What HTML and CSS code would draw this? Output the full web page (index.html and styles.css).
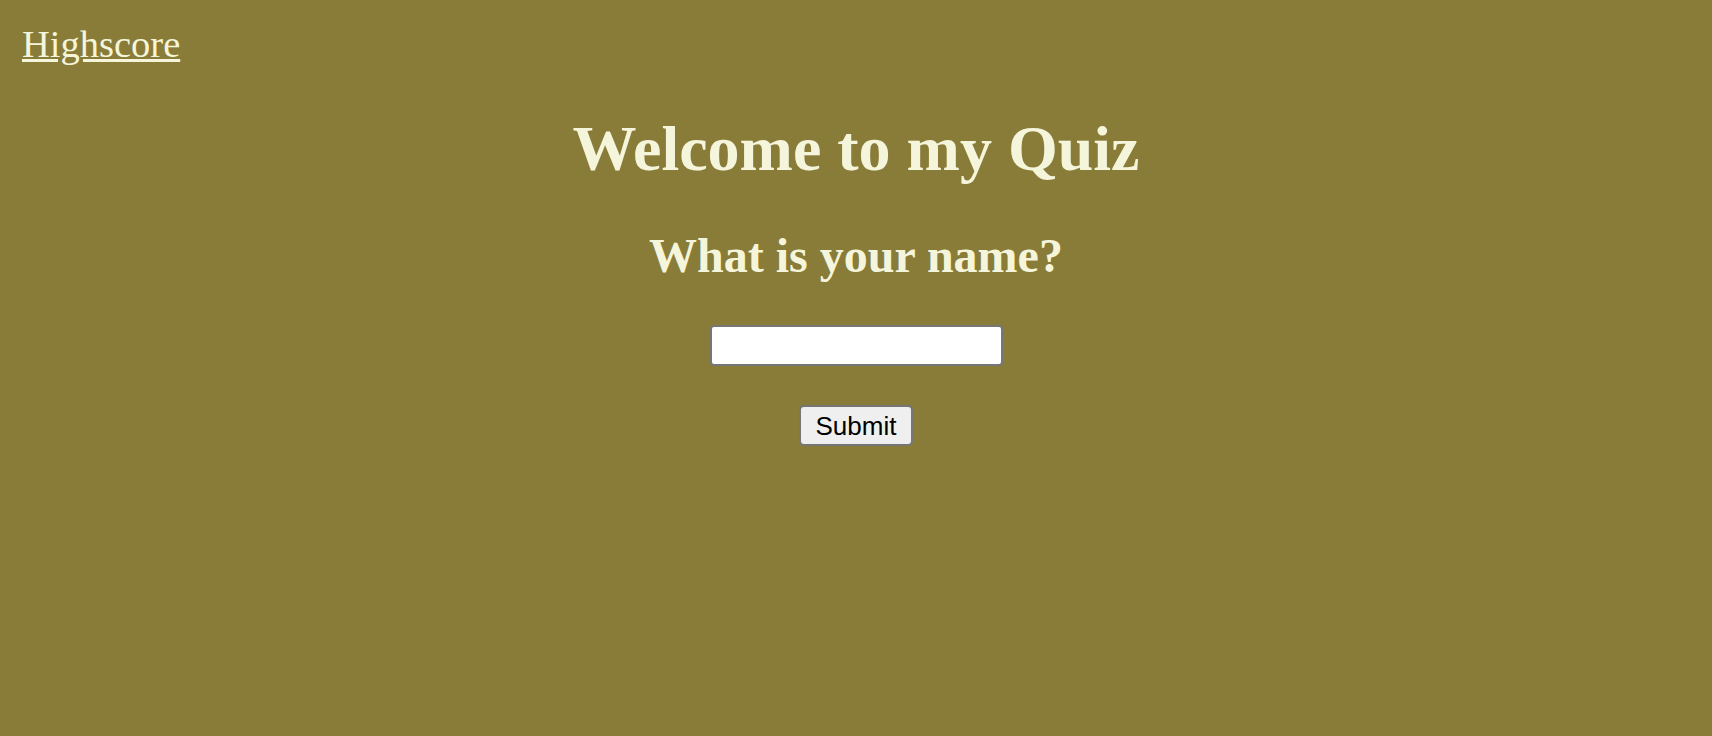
FILE: index.html
```html
<!DOCTYPE html>
<html lang="en">
<head>
<meta charset="utf-8">
<title>Quiz</title>
<link rel="stylesheet" href="styles.css">
</head>
<body>
<nav class="topbar">
  <a class="highscore-link" href="#">Highscore</a>
</nav>
<main class="start">
  <h1 class="title">Welcome to my Quiz</h1>
  <h2 class="question">What is your name?</h2>
  <input class="name-input" type="text" aria-label="Name">
  <button class="submit-btn" type="button">Submit</button>
</main>
</body>
</html>
```

FILE: styles.css
```css
html, body {
  margin: 0;
  padding: 0;
}

body {
  background: #897c38;
  color: #f5f5dc;
  font-family: "Liberation Serif", "Times New Roman", serif;
  min-height: 736px;
}

.topbar {
  padding: 22px 0 0 22px;
  height: 45px;
}

.highscore-link {
  color: #f5f5dc;
  font-size: 38.5px;
  line-height: 45px;
  text-decoration: underline;
}

.start {
  display: flex;
  flex-direction: column;
  align-items: center;
}

.title {
  margin: 45px 0 0;
  font-size: 64px;
  line-height: 74px;
  font-weight: bold;
}

.question {
  margin: 42px 0 0;
  font-size: 48px;
  line-height: 55px;
  font-weight: bold;
}

.name-input {
  margin: 42px 0 0;
  box-sizing: border-box;
  width: 293px;
  height: 41px;
  border: 2px solid #767676;
  border-radius: 4px;
  background: #ffffff;
  padding: 0 6px;
  font-size: 22px;
}

.submit-btn {
  margin: 39px 0 0;
  box-sizing: border-box;
  height: 41px;
  padding: 0 15px;
  border: 2px solid #767676;
  border-radius: 5px;
  background: #efefef;
  color: #000000;
  font-family: "Liberation Sans", Arial, sans-serif;
  font-size: 26px;
  line-height: 1;
}
```
